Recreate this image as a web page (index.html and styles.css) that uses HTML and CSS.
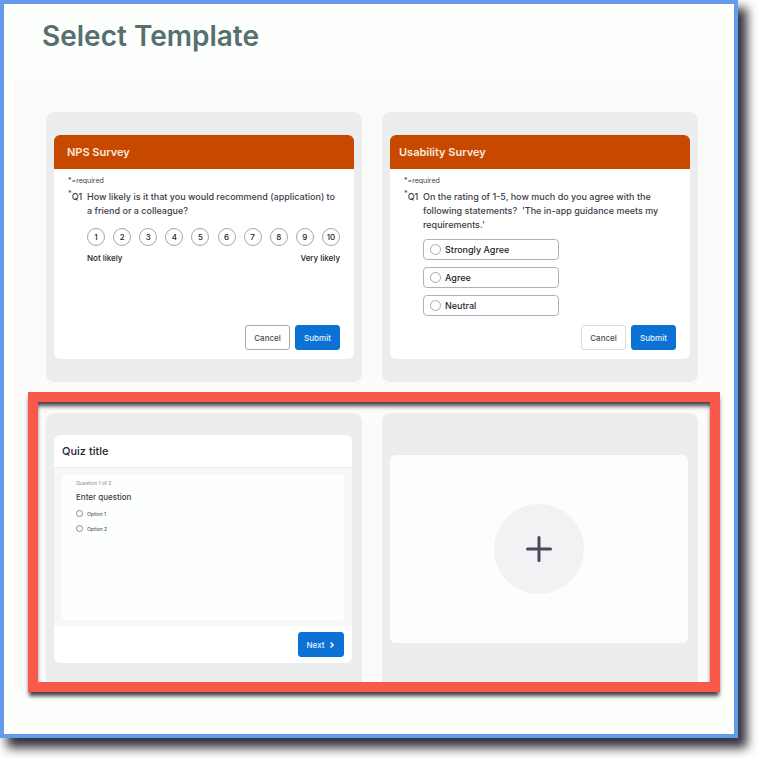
FILE: index.html
```html
<!DOCTYPE html>
<html lang="en">
<head>
<meta charset="utf-8">
<meta name="viewport" content="width=device-width, initial-scale=1">
<title>Select Template</title>
<link rel="stylesheet" href="styles.css">
</head>
<body>
<main class="window">
  <header class="window-header">
    <h1>Select Template</h1>
  </header>
  <div class="gallery">
    <div class="row">
      <section class="card">
        <form class="panel survey nps">
          <h2 class="banner">NPS Survey</h2>
          <div class="survey-body">
            <p class="required">*=required</p>
            <div class="question">
              <span class="number"><span class="star">*</span>Q1</span>
              <p>How likely is it that you would recommend (application) to a friend or a colleague?</p>
            </div>
            <div class="scale">
              <button type="button">1</button>
              <button type="button">2</button>
              <button type="button">3</button>
              <button type="button">4</button>
              <button type="button">5</button>
              <button type="button">6</button>
              <button type="button">7</button>
              <button type="button">8</button>
              <button type="button">9</button>
              <button type="button">10</button>
            </div>
            <div class="scale-ends"><span>Not likely</span><span>Very likely</span></div>
            <div class="actions">
              <button type="button" class="button outline">Cancel</button>
              <button type="button" class="button primary">Submit</button>
            </div>
          </div>
        </form>
      </section>
      <section class="card">
        <form class="panel survey usability">
          <h2 class="banner">Usability Survey</h2>
          <div class="survey-body">
            <p class="required">*=required</p>
            <div class="question">
              <span class="number"><span class="star">*</span>Q1</span>
              <p>On the rating of 1-5, how much do you agree with the following statements?&nbsp; 'The in-app guidance meets my requirements.'</p>
            </div>
            <div class="choices">
              <label class="choice"><input type="radio" name="rating">Strongly Agree</label>
              <label class="choice"><input type="radio" name="rating">Agree</label>
              <label class="choice"><input type="radio" name="rating">Neutral</label>
            </div>
            <div class="actions">
              <button type="button" class="button outline light">Cancel</button>
              <button type="button" class="button primary">Submit</button>
            </div>
          </div>
        </form>
      </section>
    </div>
    <div class="row highlighted">
      <section class="card">
        <form class="panel quiz">
          <h2 class="quiz-title">Quiz title</h2>
          <div class="quiz-body">
            <div class="quiz-sheet">
              <p class="progress">Question 1 of 2</p>
              <h3>Enter question</h3>
              <label class="option"><input type="radio" name="quiz">Option 1</label>
              <label class="option"><input type="radio" name="quiz">Option 2</label>
            </div>
          </div>
          <div class="quiz-footer">
            <button type="button" class="button primary next">Next
              <svg width="6" height="8" viewBox="0 0 6 8" aria-hidden="true"><path d="M1.5 1.5 L4.2 4 L1.5 6.5"/></svg>
            </button>
          </div>
        </form>
      </section>
      <section class="card">
        <div class="panel blank">
          <button type="button" class="add" aria-label="Blank template">
            <svg width="26" height="26" viewBox="0 0 26 26" aria-hidden="true"><path d="M13 1.5V24.5M1.5 13H24.5"/></svg>
          </button>
        </div>
      </section>
    </div>
  </div>
</main>
</body>
</html>
```
FILE: styles.css
```css
* {
  box-sizing: border-box;
}

body {
  margin: 0;
  padding-right: 20px;
  padding-bottom: 20px;
  background: #fff;
  color: #3d3c48;
  font-family: Inter, "Liberation Sans", sans-serif;
  font-size: 9px;
  line-height: 14px;
}

h1, h2, h3, p {
  margin: 0;
}

button {
  font: inherit;
  padding: 0;
}

.window {
  border: 4px solid #649bec;
  background: #fdfffd;
  box-shadow: 8px 9px 10px 1px #33333c;
  padding-bottom: 46px;
}

.window-header {
  padding: 14px 38px 26px;
}

h1 {
  color: #55706f;
  font-size: 28px;
  line-height: 36px;
  font-weight: 600;
}

.gallery {
  display: flex;
  flex-direction: column;
  gap: 31px;
  margin: 0 10px;
  padding: 32px 26px 5px 32px;
  background: #fdfafa;
}

.row {
  display: grid;
  grid-template-columns: 1fr 1fr;
  gap: 20px;
}

.card {
  display: flex;
  flex-direction: column;
  min-height: 270px;
  padding: 23px 8px;
  border-radius: 8px;
  background: #ebeeed;
}

/* Callout frame drawn round the quiz and blank templates */
.highlighted {
  position: relative;
}

.highlighted::after {
  content: "";
  position: absolute;
  inset: -21px -22px -9px -18px;
  border: 10px solid #f9594a;
  box-shadow: 0 5px 4px -1px #4a3f45, inset 0 5px 4px -1px #4a3f45;
  pointer-events: none;
}

.highlighted .card {
  padding: 22px 10px 20px 8px;
  border-radius: 8px 8px 0 0;
}

.panel {
  display: flex;
  flex-direction: column;
  flex: 1;
  border-radius: 6px;
  background: #fff;
  overflow: hidden;
}

.banner {
  padding: 10px 9px;
  background: #c74900;
  color: #fbe9dc;
  font-size: 11px;
  line-height: 14px;
  font-weight: 600;
}

.nps .banner {
  padding-left: 13px;
}

.survey-body {
  display: flex;
  flex-direction: column;
  flex: 1;
  padding: 8px 14px 9px;
}

.required {
  font-size: 7px;
  line-height: 8px;
}

.question {
  display: grid;
  grid-template-columns: 19px 1fr;
  margin-top: 5px;
  font-weight: 500;
}

.number {
  display: flex;
}

.star {
  font-size: 7px;
  line-height: 8px;
}

.scale,
.scale-ends,
.choices {
  margin-left: 19px;
}

.scale {
  display: flex;
  justify-content: space-between;
  margin-top: 10px;
}

.scale button {
  width: 18px;
  height: 18px;
  border: 1px solid #a6a6aa;
  border-radius: 50%;
  background: #fff;
  color: #222;
  font-size: 8px;
  line-height: 16px;
  font-weight: 500;
}

.scale-ends {
  display: flex;
  justify-content: space-between;
  margin-top: 5px;
  color: #1c1c1e;
  font-size: 8px;
  font-weight: 500;
}

.choices {
  display: flex;
  flex-direction: column;
  gap: 7px;
  width: 50%;
  margin-top: 7px;
}

.choice {
  display: flex;
  align-items: center;
  gap: 4px;
  height: 21px;
  padding: 0 6px;
  border: 1px solid #b2b2b6;
  border-radius: 4px;
  color: #26252c;
  font-weight: 500;
}

input[type="radio"] {
  appearance: none;
  flex: none;
  width: 11px;
  height: 11px;
  margin: 0;
  border: 1px solid #aaaaae;
  border-radius: 50%;
  background: #fff;
}

.actions {
  display: flex;
  justify-content: flex-end;
  gap: 5px;
  margin-top: auto;
}

.button {
  width: 45px;
  height: 25px;
  border: 1px solid #0b72d3;
  border-radius: 3px;
  font-size: 8px;
  font-weight: 500;
}

.primary {
  background: #0b72d3;
  color: #e6f1fc;
}

.outline {
  border-color: #a9a9ae;
  background: #fff;
  color: #4d4c56;
}

.light {
  border-color: #dcdce0;
}

.quiz-title {
  padding: 9px 8px;
  border-bottom: 1px solid #ececef;
  color: #26252f;
  font-size: 11px;
  line-height: 14px;
  font-weight: 500;
}

.quiz-body {
  display: flex;
  flex: 1;
  padding: 6px 8px;
  background: #f7f7f9;
}

.quiz-sheet {
  flex: 1;
  padding: 5px 14px;
  border-radius: 4px;
  background: #fdfffe;
}

.progress {
  color: #8b8b90;
  font-size: 5px;
  line-height: 8px;
}

h3 {
  margin: 3px 0 2px;
  font-size: 8px;
  line-height: 14px;
  font-weight: 500;
}

.option {
  display: flex;
  align-items: center;
  gap: 4px;
  height: 15px;
  font-size: 5px;
}

.option input[type="radio"] {
  width: 7px;
  height: 7px;
  border-color: #8c8c91;
}

.quiz-footer {
  display: flex;
  justify-content: flex-end;
  padding: 6px 8px;
}

.next {
  display: flex;
  align-items: center;
  justify-content: center;
  gap: 5px;
  width: 46px;
}

.next svg {
  fill: none;
  stroke: #fff;
  stroke-width: 1.4;
}

.blank {
  align-items: center;
  justify-content: center;
  margin: 20px 0;
  background: #fdfdfe;
}

.add {
  display: grid;
  place-items: center;
  width: 90px;
  height: 90px;
  border: 0;
  border-radius: 50%;
  background: #f2f1f4;
}

.add svg {
  fill: none;
  stroke: #4c475c;
  stroke-width: 3;
  stroke-linecap: round;
}
```
